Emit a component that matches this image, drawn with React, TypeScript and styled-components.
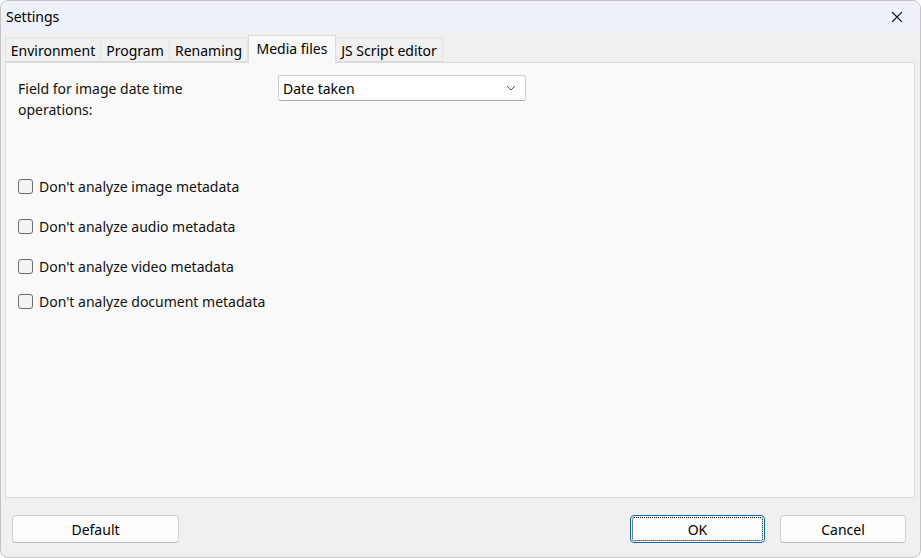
import React from 'react';
import styled, { createGlobalStyle } from 'styled-components';

const GlobalStyle = createGlobalStyle`
  html, body {
    margin: 0;
    padding: 0;
    background: #ffffff;
  }
  * {
    box-sizing: border-box;
  }
`;

const tabs = [
  { id: 'env', label: 'Environment', width: 96 },
  { id: 'prog', label: 'Program', width: 69 },
  { id: 'ren', label: 'Renaming', width: 78 },
  { id: 'media', label: 'Media files', width: 88 },
  { id: 'js', label: 'JS Script editor', width: 107 },
];

const options = [
  { id: 'image', label: "Don't analyze image metadata", gap: 0 },
  { id: 'audio', label: "Don't analyze audio metadata", gap: 19 },
  { id: 'video', label: "Don't analyze video metadata", gap: 19 },
  { id: 'doc', label: "Don't analyze document metadata", gap: 14 },
];

const Window = styled.div`
  width: 921px;
  height: 558px;
  display: flex;
  flex-direction: column;
  background: #f0f0f0;
  border: 1px solid #c4c4c4;
  border-radius: 8px;
  overflow: hidden;
  font-family: 'Noto Sans', 'Open Sans', sans-serif;
  font-size: 14px;
  color: #000;
`;

const TitleBar = styled.div`
  height: 31px;
  flex: none;
  display: flex;
  align-items: center;
  justify-content: space-between;
  padding-left: 5px;
  background: #eef2f8;
  font-size: 14px;
`;

const CloseButton = styled.div`
  width: 46px;
  height: 31px;
  display: flex;
  align-items: center;
  justify-content: center;
`;

const Body = styled.div`
  flex: 1;
  display: flex;
  flex-direction: column;
  padding: 0 5px 0 4px;
`;

const TabStrip = styled.div`
  height: 30px;
  display: flex;
  align-items: flex-end;
`;

const Tab = styled.div<{ $active?: boolean; $w: number }>`
  width: ${(p) => p.$w}px;
  height: ${(p) => (p.$active ? 28 : 25)}px;
  margin-bottom: ${(p) => (p.$active ? -1 : 0)}px;
  display: flex;
  align-items: ${(p) => (p.$active ? 'flex-start' : 'center')};
  justify-content: center;
  padding-top: ${(p) => (p.$active ? 3 : 2)}px;
  background: ${(p) => (p.$active ? '#f9f9f9' : '#f0f0f0')};
  border: 1px solid ${(p) => (p.$active ? '#dcdcdc' : '#e3e3e3')};
  border-bottom: ${(p) => (p.$active ? 'none' : '1px solid #dcdcdc')};
  border-left-width: ${(p) => (p.$active ? 1 : 0)}px;
  position: relative;
  z-index: ${(p) => (p.$active ? 1 : 0)};
  white-space: nowrap;

  &:first-child {
    border-left-width: 1px;
  }
`;

const Panel = styled.div`
  flex: 1;
  background: #f9f9f9;
  border: 1px solid #dcdcdc;
  padding: 12px 12px 0 12px;
`;

const FieldRow = styled.div`
  display: grid;
  grid-template-columns: 260px 248px;
  align-items: start;
`;

const FieldLabel = styled.div`
  padding-top: 3px;
  line-height: 21px;
  width: 190px;
  color: #111;
`;

const Combo = styled.div`
  height: 26px;
  display: flex;
  align-items: center;
  justify-content: space-between;
  padding: 0 9px 0 4px;
  background: #ffffff;
  border: 1px solid #cfcfcf;
  border-bottom-color: #a8a8a8;
  border-radius: 3px;
`;

const OptionList = styled.div`
  margin-top: 56px;
  display: flex;
  flex-direction: column;
`;

const OptionRow = styled.label<{ $gap: number }>`
  margin-top: ${(p) => p.$gap}px;
  height: 21px;
  display: flex;
  align-items: center;
  gap: 6px;
  color: #111;
`;

const Box = styled.span`
  width: 15px;
  height: 15px;
  flex: none;
  border: 1px solid #6b6b6b;
  border-radius: 3px;
  background: #f4f4f4;
`;

const Footer = styled.div`
  height: 59px;
  flex: none;
  display: flex;
  align-items: flex-start;
  padding: 17px 9px 0 7px;
`;

const Button = styled.div<{ $w: number; $primary?: boolean }>`
  width: ${(p) => p.$w}px;
  height: 28px;
  display: flex;
  align-items: center;
  justify-content: center;
  background: #fdfdfd;
  border: 1px solid ${(p) => (p.$primary ? '#0067c0' : '#d0d0d0')};
  border-bottom-color: ${(p) => (p.$primary ? '#0067c0' : '#bcbcbc')};
  border-radius: 4px;
  position: relative;

  ${(p) =>
    p.$primary &&
    `
    &::after {
      content: '';
      position: absolute;
      inset: 1px;
      border: 1px dotted #000;
      border-radius: 2px;
    }
  `}
`;

const Spacer = styled.div`
  flex: 1;
`;

const ButtonGap = styled.div`
  width: 15px;
`;

export default function App() {
  return (
    <>
      <GlobalStyle />
      <Window>
        <TitleBar>
          <span>Settings</span>
          <CloseButton>
            <svg width="12" height="12" viewBox="0 0 12 12">
              <path d="M1 1 L11 11 M11 1 L1 11" stroke="#1a1a1a" strokeWidth="1.1" fill="none" />
            </svg>
          </CloseButton>
        </TitleBar>
        <Body>
          <TabStrip>
            {tabs.map((t) => (
              <Tab key={t.id} $w={t.width} $active={t.id === 'media'}>
                {t.label}
              </Tab>
            ))}
          </TabStrip>
          <Panel>
            <FieldRow>
              <FieldLabel>Field for image date time operations:</FieldLabel>
              <Combo>
                <span>Date taken</span>
                <svg width="10" height="6" viewBox="0 0 10 6">
                  <path d="M1 1 L5 5 L9 1" stroke="#555" strokeWidth="1" fill="none" />
                </svg>
              </Combo>
            </FieldRow>
            <OptionList>
              {options.map((o) => (
                <OptionRow key={o.id} $gap={o.gap}>
                  <Box />
                  <span>{o.label}</span>
                </OptionRow>
              ))}
            </OptionList>
          </Panel>
          <Footer>
            <Button $w={167}>Default</Button>
            <Spacer />
            <Button $w={135} $primary>
              OK
            </Button>
            <ButtonGap />
            <Button $w={126}>Cancel</Button>
          </Footer>
        </Body>
      </Window>
    </>
  );
}
